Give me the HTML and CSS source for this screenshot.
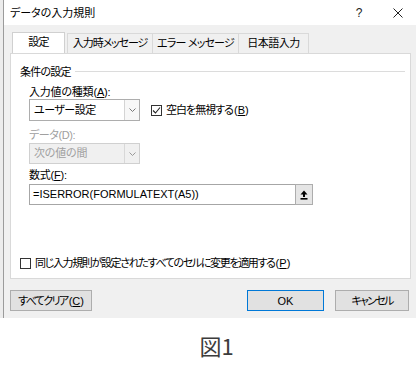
FILE: index.html
```html
<!DOCTYPE html>
<html lang="ja">
<head>
<meta charset="utf-8">
<title>データの入力規則</title>
<link rel="stylesheet" href="styles.css">
</head>
<body>
<div class="screen">
  <div class="sheet-edge"></div>
  <div class="dialog">
    <div class="titlebar">
      <span class="title">データの入力規則</span>
      <span class="tb-btn help">?</span>
      <span class="tb-btn close"><svg width="10" height="10" viewBox="0 0 10 10"><path d="M0.5 0.5 L9.5 9.5 M9.5 0.5 L0.5 9.5" stroke="#222" stroke-width="1" fill="none"/></svg></span>
    </div>
    <div class="body">
      <div class="tabs">
        <div class="tab active t1">設定</div>
        <div class="tab t2">入力時メッセージ</div>
        <div class="tab t3">エラー メッセージ</div>
        <div class="tab t4">日本語入力</div>
      </div>
      <div class="panel">
        <div class="group-head"><span class="group-title">条件の設定</span><span class="rule"></span></div>
        <div class="group">
          <div class="label">入力値の種類(<u>A</u>):</div>
          <div class="row">
            <div class="select"><span class="val">ユーザー設定</span><span class="drop"><svg width="7" height="4" viewBox="0 0 7 4"><path d="M0.5 0.5 L3.5 3.5 L6.5 0.5" stroke="#777" stroke-width="1" fill="none"/></svg></span></div>
            <div class="check blank"><span class="box"><svg width="9" height="9" viewBox="0 0 9 9"><path d="M1 4.5 L3.5 7 L8 1.5" stroke="#222" stroke-width="1.1" fill="none"/></svg></span><span class="check-text">空白を無視する<span class="key">(<u>B</u>)</span></span></div>
          </div>
          <div class="label disabled data">データ(D):</div>
          <div class="select off"><span class="val">次の値の間</span><span class="drop"><svg width="7" height="4" viewBox="0 0 7 4"><path d="M0.5 0.5 L3.5 3.5 L6.5 0.5" stroke="#999" stroke-width="1" fill="none"/></svg></span></div>
          <div class="label formula">数式(<u>F</u>):</div>
          <div class="input"><span class="val">=ISERROR(FORMULATEXT(A5))</span><span class="ref-btn"><svg width="8" height="10" viewBox="0 0 8 10"><path d="M4 0.5 L7.5 4.5 L5 4.5 L5 7 L3 7 L3 4.5 L0.5 4.5 Z" fill="#000"/><rect x="0.5" y="8" width="7" height="1.6" fill="#000"/></svg></span></div>
        </div>
        <div class="check apply"><span class="box"></span><span class="check-text">同じ入力規則が設定されたすべてのセルに変更を適用する<span class="key">(<u>P</u>)</span></span></div>
      </div>
      <div class="buttons">
        <div class="btn clear">すべてクリア<span class="key">(<u>C</u>)</span></div>
        <div class="btn ok">OK</div>
        <div class="btn cancel">キャンセル</div>
      </div>
    </div>
  </div>
</div>
<div class="caption">図1</div>
</body>
</html>
```

FILE: styles.css
```css
* { box-sizing: border-box; }
html, body { margin: 0; padding: 0; background: #fff; }
body {
  width: 416px;
  height: 375px;
  overflow: hidden;
  font-family: "Liberation Sans", "Noto Sans CJK JP", sans-serif;
  font-size: 11px;
  color: #000;
  font-feature-settings: "palt";
}
u { text-decoration: underline; text-underline-offset: 1px; }
.key { letter-spacing: 0; margin-left: 1px; }

.screen { display: flex; height: 318px; }
.sheet-edge {
  width: 4px;
  background: #ececec;
  border-right: 1px solid #9b9b9b;
}
.dialog {
  flex: 1;
  display: flex;
  flex-direction: column;
  background: #f0f0f0;
}

.titlebar {
  height: 25px;
  background: #fff;
  display: flex;
  align-items: center;
  padding-left: 6px;
}
.title { flex: 1; line-height: 14px; }
.tb-btn { display: flex; justify-content: center; align-items: center; height: 25px; }
.help { width: 42px; font-size: 12px; color: #222; }
.close { width: 36px; }

.body {
  flex: 1;
  display: flex;
  flex-direction: column;
  padding: 8px 5px 7px 6px;
}

.tabs { display: flex; height: 20px; margin-left: 2px; position: relative; z-index: 1; }
.tab {
  height: 20px;
  border: 1px solid #d9d9d9;
  border-bottom: none;
  background: #f0f0f0;
  text-align: center;
  line-height: 19px;
  letter-spacing: -0.8px;
  white-space: nowrap;
}
.tab.active { background: #fff; height: 21px; margin-top: -1px; border-color: #d0d0d0; }
.t1 { width: 53px; }
.t2 { width: 86px; margin-left: 2px; letter-spacing: -1.1px; }
.t3 { width: 86px; border-left: none; }
.t4 { width: 70px; border-left: none; letter-spacing: -0.5px; }

.panel {
  height: 226px;
  background: #fff;
  border: 1px solid #d9d9d9;
  padding: 11px 5px 8px 9px;
  display: flex;
  flex-direction: column;
}
.group-head { display: flex; align-items: center; height: 14px; line-height: 14px; }
.group-title { letter-spacing: -0.8px; }
.rule { flex: 1; border-top: 1px solid #dcdcdc; margin-left: 4px; margin-top: -2px; }

.group { margin-left: 9px; display: flex; flex-direction: column; }
.label { line-height: 14px; height: 14px; margin-top: 6px; letter-spacing: -0.2px; }
.label.data { margin-top: 7px; letter-spacing: -0.4px; }
.label.formula { margin-top: 4px; }
.disabled { color: #a0a0a0; }

.row { display: flex; align-items: center; }
.select {
  width: 111px;
  height: 22px;
  border: 1px solid #adadad;
  background: #fff;
  display: flex;
  align-items: stretch;
}
.select .val { flex: 1; padding-left: 4px; line-height: 20px; letter-spacing: -0.5px; }
.select .drop {
  width: 15px;
  border-left: 1px solid #d4d4d4;
  background: #f7f7f7;
  display: flex;
  align-items: center;
  justify-content: center;
}
.select.off { height: 21px; margin-top: 1px; background: #f0f0f0; border-color: #d0d0d0; color: #a0a0a0; }
.select.off .val { line-height: 19px; letter-spacing: -0.2px; }
.select.off .drop { background: #f0f0f0; border-left-color: #d8d8d8; }

.check { display: flex; align-items: center; line-height: 14px; white-space: nowrap; }
.row .check { margin-left: 11px; }
.blank .check-text { letter-spacing: -1px; }
.box {
  width: 11px;
  height: 11px;
  border: 1px solid #333;
  background: #fff;
  display: flex;
  align-items: center;
  justify-content: center;
  margin-right: 4px;
  flex: none;
}

.input {
  width: 284px;
  height: 21px;
  margin-top: 2px;
  border: 1px solid #a6a6a6;
  display: flex;
  align-items: stretch;
}
.input .val { flex: 1; padding-left: 3px; line-height: 19px; }
.ref-btn {
  width: 18px;
  margin: -1px -1px -1px 0;
  border: 1px solid #adadad;
  background: #e5e5e5;
  display: flex;
  align-items: center;
  justify-content: center;
}

.apply { margin-top: auto; height: 14px; }
.apply .check-text { letter-spacing: -1.35px; }

.buttons { display: flex; margin-top: 11px; height: 21px; }
.btn {
  border: 1px solid #adadad;
  background: #e1e1e1;
  display: flex;
  align-items: center;
  justify-content: center;
  line-height: 14px;
  white-space: nowrap;
}
.clear { width: 82px; letter-spacing: -1.6px; }
.ok { width: 77px; margin-left: auto; border-color: #0078d7; }
.cancel { width: 74px; margin-left: 11px; margin-right: 2px; letter-spacing: -1.7px; }

.caption {
  height: 57px;
  padding-top: 13px;
  padding-left: 17px;
  text-align: center;
  font-family: "Noto Sans CJK JP", sans-serif;
  font-size: 22px;
  line-height: 28px;
  color: #3c3c3c;
}
```
